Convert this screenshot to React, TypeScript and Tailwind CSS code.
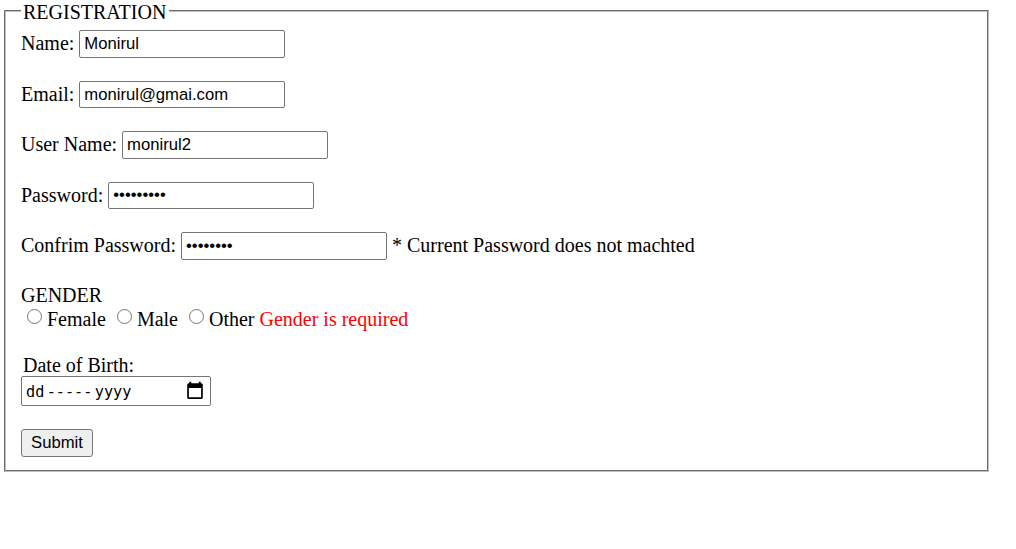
import type { ReactNode } from "react";

type FieldProps = { label: string; type?: string; value: string; children?: ReactNode };

function Field({ label, type = "text", value, children }: FieldProps) {
  return (
    <div className="flex h-[50.4px] items-start whitespace-pre">
      <label className="flex items-start">
        <span className="pt-[2px]">{label} </span>
        <input
          type={type}
          defaultValue={value}
          className="h-[27.6px] w-[206px] rounded-[2px] border border-[#767676] bg-white px-[4px] py-0 font-['Liberation_Sans',Arial,sans-serif] text-[16.667px] leading-[25px] text-black outline-none"
        />
      </label>
      {children}
    </div>
  );
}

function Radio({ label }: { label: string }) {
  return (
    <label className="flex items-start">
      <input
        type="radio"
        name="gender"
        className="ml-[6px] mr-[5px] mt-[1px] size-[15px] appearance-none rounded-full border border-[#767676] bg-white"
      />
      <span>{label} </span>
    </label>
  );
}

export default function App() {
  return (
    <main className="h-[549px] w-[1016px] overflow-hidden bg-white pl-[4px] font-['Liberation_Serif','Times_New_Roman',serif] text-[20px] leading-[23px] text-black">
      <fieldset className="h-[472px] w-[985px] border-2 border-[#c0c0c0] px-[15px] [border-style:groove]">
        <legend className="h-[22px] w-[148px] whitespace-nowrap pl-[2px] leading-[25px]">REGISTRATION</legend>
        <form className="pt-[8.4px]" onSubmit={(event) => event.preventDefault()}>
          <Field label="Name:" value="Monirul" />
          <Field label="Email:" value="monirul@gmai.com" />
          <Field label="User Name:" value="monirul2" />
          <Field label="Password:" type="password" value="monirul12" />
          <Field label="Confrim Password:" type="password" value="monirul1">
            <span className="pt-[2px]"> * Current Password does not machted</span>
          </Field>
          <div className="h-[25.6px] pt-[2px]">GENDER</div>
          <div className="flex h-[44px] items-start whitespace-pre">
            <Radio label="Female" />
            <Radio label="Male" />
            <Radio label="Other" />
            <span className="text-[#ff0000]">Gender is required</span>
          </div>
          <div className="h-[24px] pl-[2px] pt-[2px] leading-[22px]">Date of Birth:</div>
          <div className="flex h-[30px] w-[190px] items-center justify-between rounded-[2px] border border-[#767676] pl-[4px] pr-[6px] font-['DejaVu_Sans_Mono',monospace] text-[15.23px] leading-[28px]">
            <div className="flex gap-[2.3px] pt-[2px]">
              <span>dd</span>
              <span>-----</span>
              <span>yyyy</span>
            </div>
            <svg width="18" height="20" viewBox="0 0 18 20" aria-hidden="true">
              <path
                fillRule="evenodd"
                d="M3.3.7h1.9v1.6h7.6V.7h1.9v1.6h.6q1.5 0 1.5 1.5v12.7q0 1.5-1.5 1.5H2.7q-1.5 0-1.5-1.5V3.8q0-1.5 1.5-1.5h.6zM2.9 6.9v9.4h12.2V6.9z"
              />
            </svg>
          </div>
          <button
            type="submit"
            className="mt-[23px] h-[28px] w-[72px] rounded-[3px] border border-[#767676] bg-[#efefef] font-['Liberation_Sans',Arial,sans-serif] text-[16.667px] leading-[26px]"
          >
            Submit
          </button>
        </form>
      </fieldset>
    </main>
  );
}
